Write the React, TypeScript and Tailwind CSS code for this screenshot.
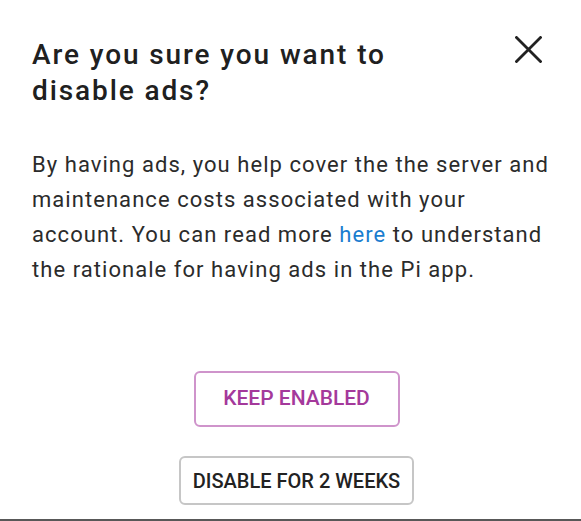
import React from "react";

export default function App() {
  return (
    <div
      className="w-[581px] h-[521px] bg-white flex flex-col overflow-hidden"
      style={{ fontFamily: "Roboto, 'Noto Sans', sans-serif" }}
    >
      <div className="flex-1 flex flex-col pl-8 pr-5 pt-[37px]">
        {/* Header: title and close button */}
        <div className="flex flex-row justify-between items-start">
          <h2 className="w-[420px] text-[28px] leading-[36px] tracking-[1.9px] font-medium text-[#202020]">
            Are you sure you want to disable ads?
          </h2>
          <button className="mt-[-1px] mr-[19px] w-[27px] h-[27px] flex items-center justify-center">
            <svg width="27" height="27" viewBox="0 0 27 27">
              <path
                d="M1.5 1.5 L25.5 25.5 M25.5 1.5 L1.5 25.5"
                stroke="#222"
                strokeWidth="2.8"
                strokeLinecap="square"
                fill="none"
              />
            </svg>
          </button>
        </div>

        {/* Body copy */}
        <p className="mt-[38px] text-[22px] leading-[35px] tracking-[1.05px] text-[#2b2b2b]">
          By having ads, you help cover the the server and maintenance costs
          associated with your account. You can read more{" "}
          <a className="text-[#1a7dcf]">here</a> to understand the rationale for
          having ads in the Pi app.
        </p>

        {/* Actions */}
        <div className="mt-[84px] flex flex-col items-center gap-[29px]">
          <button className="w-[206px] h-[56px] rounded-[6px] border-2 border-[#cf94cb] text-[#a4399b] text-[21px] font-medium uppercase">
            Keep enabled
          </button>
          <button className="w-[235px] h-[49px] rounded-[6px] border-2 border-[#c6c6c6] text-[#222] text-[20px] font-medium uppercase">
            Disable for 2 weeks
          </button>
        </div>
      </div>
      <div className="h-[2px] bg-[#585858]" />
    </div>
  );
}
